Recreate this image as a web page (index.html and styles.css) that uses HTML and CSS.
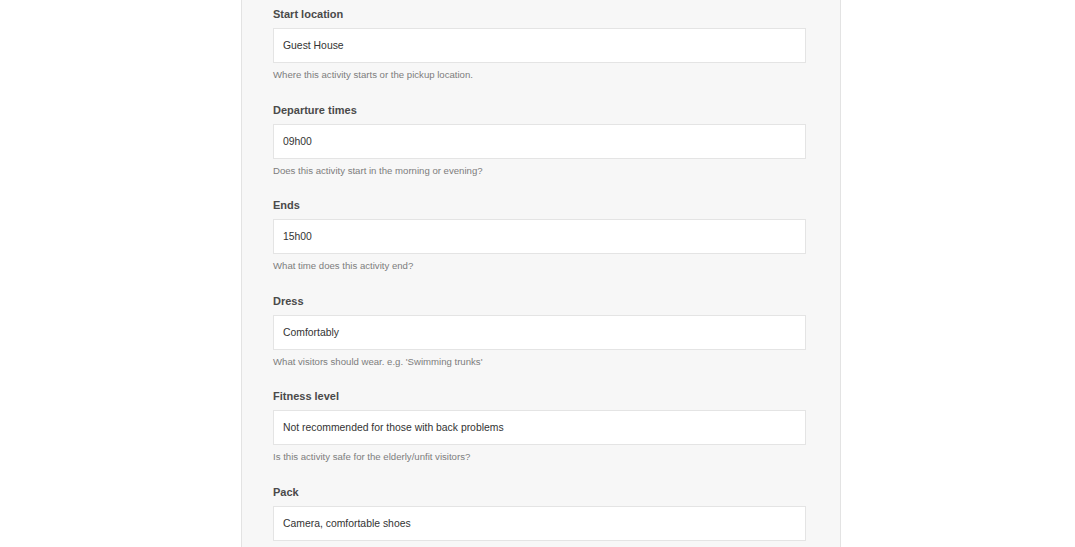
FILE: index.html
```html
<!DOCTYPE html>
<html>
<head>
<meta charset="utf-8">
<link rel="stylesheet" href="styles.css">
</head>
<body>
<div class="page">
  <div class="panel">
    <div class="field">
      <label class="label">Start location</label>
      <div class="input">Guest House</div>
      <div class="help">Where this activity starts or the pickup location.</div>
    </div>
    <div class="field">
      <label class="label">Departure times</label>
      <div class="input">09h00</div>
      <div class="help">Does this activity start in the morning or evening?</div>
    </div>
    <div class="field">
      <label class="label">Ends</label>
      <div class="input">15h00</div>
      <div class="help">What time does this activity end?</div>
    </div>
    <div class="field">
      <label class="label">Dress</label>
      <div class="input">Comfortably</div>
      <div class="help">What visitors should wear. e.g. 'Swimming trunks'</div>
    </div>
    <div class="field">
      <label class="label">Fitness level</label>
      <div class="input">Not recommended for those with back problems</div>
      <div class="help">Is this activity safe for the elderly/unfit visitors?</div>
    </div>
    <div class="field">
      <label class="label">Pack</label>
      <div class="input">Camera, comfortable shoes</div>
    </div>
  </div>
</div>
</body>
</html>
```
FILE: styles.css
```css
html, body {
  margin: 0;
  padding: 0;
  background: #ffffff;
  height: 100%;
  overflow: hidden;
}
body {
  font-family: "Liberation Sans", Arial, sans-serif;
}
.page {
  margin-left: 241px;
  width: 600px;
}
.panel {
  box-sizing: border-box;
  width: 600px;
  min-height: 547px;
  background: #f7f7f7;
  border-left: 1px solid #e3e3e3;
  border-right: 1px solid #e3e3e3;
  padding: 6px 34px 0 31px;
}
.field {
  display: flex;
  flex-direction: column;
  margin-bottom: 20.6px;
}
.label {
  display: block;
  font-size: 11px;
  font-weight: bold;
  line-height: 16px;
  color: #4a4a4a;
  margin-bottom: 6px;
}
.input {
  box-sizing: border-box;
  height: 35px;
  background: #ffffff;
  border: 1px solid #e4e4e4;
  padding: 0 9px;
  font-size: 10.4px;
  line-height: 33px;
  color: #333333;
}
.help {
  font-size: 9.6px;
  line-height: 12px;
  color: #7d7d7d;
  margin-top: 6px;
}
```
